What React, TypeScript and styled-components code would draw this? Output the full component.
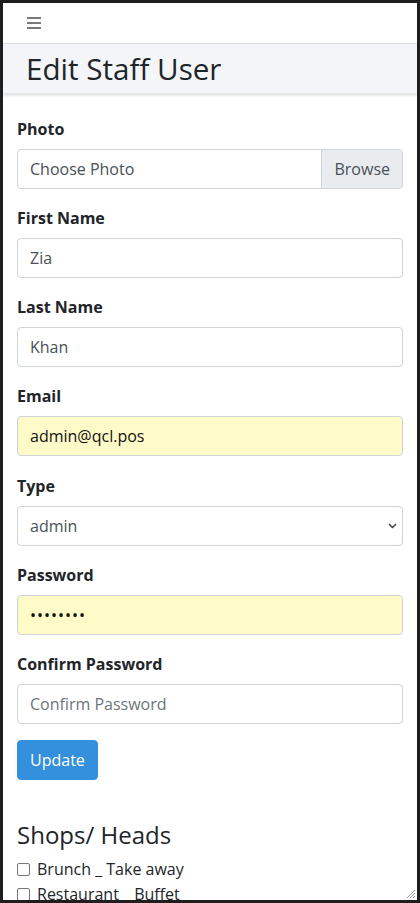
import React from 'react';
import styled, { createGlobalStyle } from 'styled-components';

const GlobalStyle = createGlobalStyle`
  html, body {
    margin: 0;
    padding: 0;
    background: #1e1e1e;
  }
  * { box-sizing: border-box; }
  body {
    font-family: "Open Sans", "Noto Sans", sans-serif;
    color: #212529;
  }
`;

const shops = ['Brunch _ Take away', 'Restaurant _ Buffet'];

const App: React.FC = () => {
  return (
    <>
      <GlobalStyle />
      <Frame>
        <Navbar>
          <Burger aria-label="menu">
            <svg width="14" height="12" viewBox="0 0 14 12">
              <rect x="0" y="0" width="14" height="2" fill="#7a7a7a" />
              <rect x="0" y="5" width="14" height="2" fill="#7a7a7a" />
              <rect x="0" y="10" width="14" height="2" fill="#7a7a7a" />
            </svg>
          </Burger>
        </Navbar>
        <PageHeader>
          <Title>Edit Staff User</Title>
        </PageHeader>

        <Content>
          <FormGroup>
            <Label>Photo</Label>
            <FileInput>
              <FileName>Choose Photo</FileName>
              <BrowseButton>Browse</BrowseButton>
            </FileInput>
          </FormGroup>

          <FormGroup>
            <Label>First Name</Label>
            <Input defaultValue="Zia" />
          </FormGroup>

          <FormGroup>
            <Label>Last Name</Label>
            <Input defaultValue="Khan" />
          </FormGroup>

          <FormGroup>
            <Label>Email</Label>
            <Input autofilled defaultValue="admin@qcl.pos" />
          </FormGroup>

          <FormGroup>
            <Label>Type</Label>
            <SelectWrap>
              <Select defaultValue="admin">
                <option value="admin">admin</option>
                <option value="staff">staff</option>
              </Select>
              <Chevron width="9" height="6" viewBox="0 0 9 6">
                <path d="M1 1 L4.5 4.5 L8 1" stroke="#343a40" strokeWidth="1.4" fill="none" />
              </Chevron>
            </SelectWrap>
          </FormGroup>

          <FormGroup>
            <Label>Password</Label>
            <Input autofilled type="password" defaultValue="12345678" />
          </FormGroup>

          <FormGroup>
            <Label>Confirm Password</Label>
            <Input type="password" placeholder="Confirm Password" />
          </FormGroup>

          <PrimaryButton>Update</PrimaryButton>

          <SectionTitle>Shops/ Heads</SectionTitle>
          <CheckList>
            {shops.map((shop) => (
              <CheckRow key={shop}>
                <Box />
                <span>{shop}</span>
              </CheckRow>
            ))}
          </CheckList>
        </Content>

        <Grip width="12" height="12" viewBox="0 0 12 12">
          <path d="M11 3 L3 11 M11 6 L6 11 M11 9 L9 11" stroke="#9a9a9a" strokeWidth="1" />
        </Grip>
      </Frame>
    </>
  );
};

export default App;

const Frame = styled.div`
  position: relative;
  height: 903px;
  border: 3px solid #1e1e1e;
  background: #fff;
  overflow: hidden;
`;

const Navbar = styled.nav`
  height: 41px;
  display: flex;
  align-items: center;
  padding-left: 24px;
  background: #fff;
  border-bottom: 1px solid #dcdfe4;
`;

const Burger = styled.button`
  border: 0;
  background: transparent;
  padding: 0;
  display: flex;
`;

const PageHeader = styled.header`
  background: #f4f5f8;
  padding: 6px 23px 5px;
  box-shadow: 0 2px 2px rgba(0, 0, 0, 0.1);
  border-bottom: 1px solid #e3e5e8;
`;

const Title = styled.h1`
  margin: 0;
  font-size: 29.6px;
  font-weight: 400;
  line-height: 38px;
  color: #212529;
`;

const Content = styled.main`
  padding: 23px 14px 0 14px;
`;

const FormGroup = styled.div`
  margin-bottom: 17.17px;
`;

const Label = styled.label`
  display: block;
  font-size: 16px;
  font-weight: 700;
  line-height: 24px;
  margin-bottom: 8px;
`;

const Input = styled.input<{ autofilled?: boolean }>`
  display: block;
  width: 100%;
  height: 40px;
  padding: 6px 12px;
  font-family: inherit;
  font-size: 16px;
  color: ${({ autofilled }) => (autofilled ? '#111' : '#495057')};
  background: ${({ autofilled }) => (autofilled ? '#fffbc9' : '#fff')};
  border: 1px solid #ced4da;
  border-radius: 4px;
  outline: none;
  letter-spacing: ${({ type }) => (type === 'password' ? '1px' : 'normal')};

  &::placeholder {
    color: #6c757d;
    letter-spacing: normal;
  }
`;

const FileInput = styled.div`
  display: flex;
  height: 40px;
  border: 1px solid #ced4da;
  border-radius: 4px;
  overflow: hidden;
  font-size: 16px;
  color: #495057;
`;

const FileName = styled.div`
  flex: 1;
  display: flex;
  align-items: center;
  padding: 0 12px;
`;

const BrowseButton = styled.div`
  display: flex;
  align-items: center;
  padding: 0 12px;
  background: #e9ecef;
  border-left: 1px solid #ced4da;
`;

const SelectWrap = styled.div`
  position: relative;
`;

const Select = styled.select`
  display: block;
  width: 100%;
  height: 40px;
  padding: 6px 12px;
  font-family: inherit;
  font-size: 16px;
  color: #495057;
  background: #fff;
  border: 1px solid #ced4da;
  border-radius: 4px;
  appearance: none;
  outline: none;
`;

const Chevron = styled.svg`
  position: absolute;
  right: 6px;
  top: 17px;
  pointer-events: none;
`;

const PrimaryButton = styled.button`
  height: 40px;
  padding: 0 12px;
  margin-top: -1px;
  font-family: inherit;
  font-size: 16px;
  color: #fff;
  background: #3490dc;
  border: 1px solid #3490dc;
  border-radius: 4px;
`;

const SectionTitle = styled.h3`
  margin: 40px 0 8px;
  font-size: 24px;
  font-weight: 400;
  line-height: 29px;
`;

const CheckList = styled.div`
  display: flex;
  flex-direction: column;
`;

const CheckRow = styled.label`
  display: flex;
  align-items: center;
  gap: 7px;
  font-size: 16px;
  line-height: 25px;
`;

const Box = styled.span`
  width: 13px;
  height: 13px;
  border: 1px solid #767676;
  border-radius: 2px;
  background: #fff;
`;

const Grip = styled.svg`
  position: absolute;
  right: 1px;
  bottom: 1px;
`;
